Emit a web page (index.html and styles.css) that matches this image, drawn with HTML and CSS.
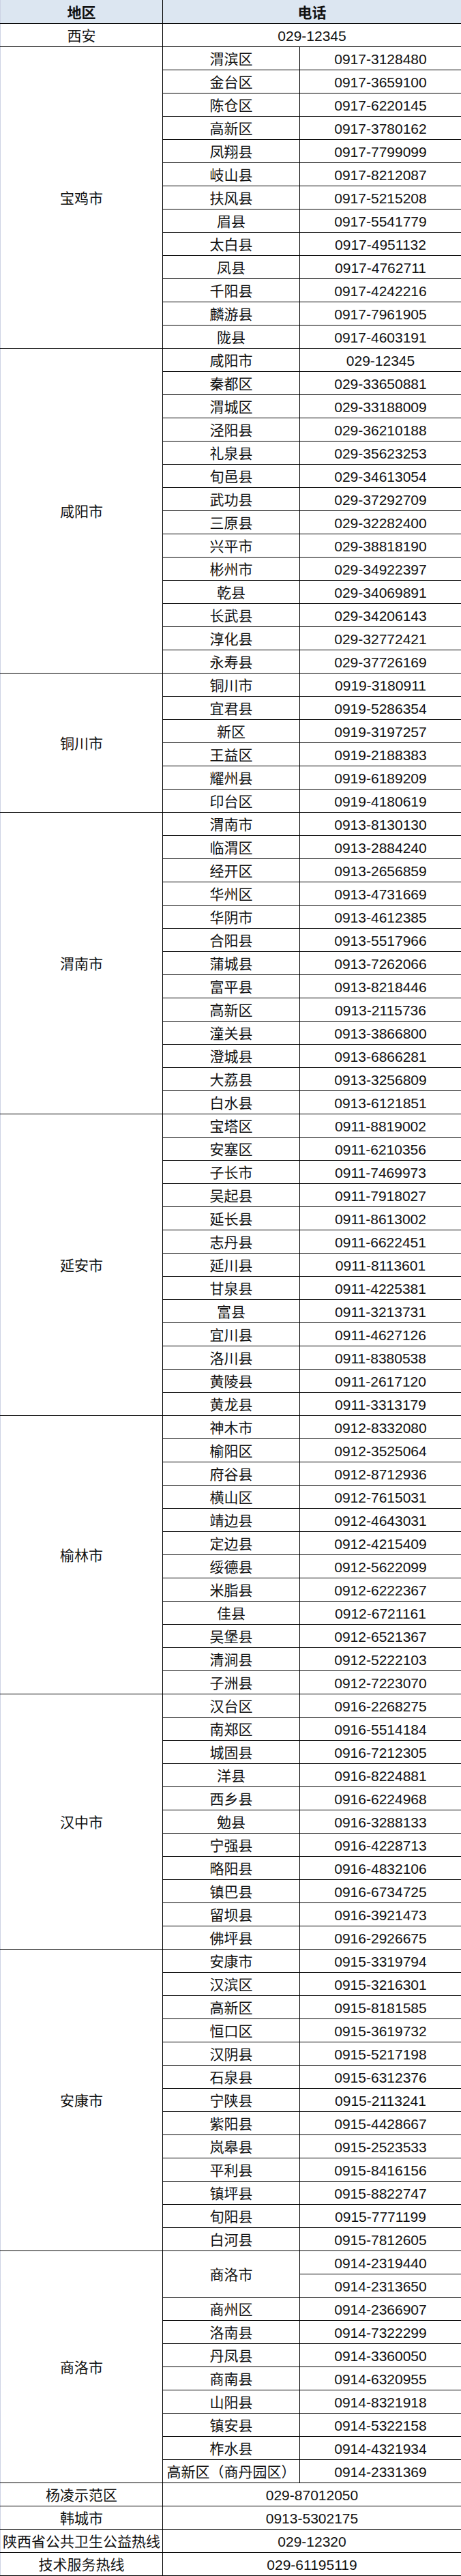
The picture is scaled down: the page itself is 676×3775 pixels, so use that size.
FILE: index.html
```html
<!DOCTYPE html>
<html lang="zh-CN">
<head>
<meta charset="utf-8">
<title>陕西各地区电话</title>
<link rel="stylesheet" href="styles.css">
</head>
<body>
<table class="tbl">
<colgroup><col class="c1"><col class="c2"><col class="c3"></colgroup>
<thead>
<tr><th class="area">地区</th><th colspan="2">电话</th></tr>
</thead>
<tbody>
<tr><td class="area">西安</td><td colspan="2">029-12345</td></tr>

<tr><td class="area" rowspan="13">宝鸡市</td><td>渭滨区</td><td>0917-3128480</td></tr>
<tr><td>金台区</td><td>0917-3659100</td></tr>
<tr><td>陈仓区</td><td>0917-6220145</td></tr>
<tr><td>高新区</td><td>0917-3780162</td></tr>
<tr><td>凤翔县</td><td>0917-7799099</td></tr>
<tr><td>岐山县</td><td>0917-8212087</td></tr>
<tr><td>扶风县</td><td>0917-5215208</td></tr>
<tr><td>眉县</td><td>0917-5541779</td></tr>
<tr><td>太白县</td><td>0917-4951132</td></tr>
<tr><td>凤县</td><td>0917-4762711</td></tr>
<tr><td>千阳县</td><td>0917-4242216</td></tr>
<tr><td>麟游县</td><td>0917-7961905</td></tr>
<tr><td>陇县</td><td>0917-4603191</td></tr>

<tr><td class="area" rowspan="14">咸阳市</td><td>咸阳市</td><td>029-12345</td></tr>
<tr><td>秦都区</td><td>029-33650881</td></tr>
<tr><td>渭城区</td><td>029-33188009</td></tr>
<tr><td>泾阳县</td><td>029-36210188</td></tr>
<tr><td>礼泉县</td><td>029-35623253</td></tr>
<tr><td>旬邑县</td><td>029-34613054</td></tr>
<tr><td>武功县</td><td>029-37292709</td></tr>
<tr><td>三原县</td><td>029-32282400</td></tr>
<tr><td>兴平市</td><td>029-38818190</td></tr>
<tr><td>彬州市</td><td>029-34922397</td></tr>
<tr><td>乾县</td><td>029-34069891</td></tr>
<tr><td>长武县</td><td>029-34206143</td></tr>
<tr><td>淳化县</td><td>029-32772421</td></tr>
<tr><td>永寿县</td><td>029-37726169</td></tr>

<tr><td class="area" rowspan="6">铜川市</td><td>铜川市</td><td>0919-3180911</td></tr>
<tr><td>宜君县</td><td>0919-5286354</td></tr>
<tr><td>新区</td><td>0919-3197257</td></tr>
<tr><td>王益区</td><td>0919-2188383</td></tr>
<tr><td>耀州县</td><td>0919-6189209</td></tr>
<tr><td>印台区</td><td>0919-4180619</td></tr>

<tr><td class="area" rowspan="13">渭南市</td><td>渭南市</td><td>0913-8130130</td></tr>
<tr><td>临渭区</td><td>0913-2884240</td></tr>
<tr><td>经开区</td><td>0913-2656859</td></tr>
<tr><td>华州区</td><td>0913-4731669</td></tr>
<tr><td>华阴市</td><td>0913-4612385</td></tr>
<tr><td>合阳县</td><td>0913-5517966</td></tr>
<tr><td>蒲城县</td><td>0913-7262066</td></tr>
<tr><td>富平县</td><td>0913-8218446</td></tr>
<tr><td>高新区</td><td>0913-2115736</td></tr>
<tr><td>潼关县</td><td>0913-3866800</td></tr>
<tr><td>澄城县</td><td>0913-6866281</td></tr>
<tr><td>大荔县</td><td>0913-3256809</td></tr>
<tr><td>白水县</td><td>0913-6121851</td></tr>

<tr><td class="area" rowspan="13">延安市</td><td>宝塔区</td><td>0911-8819002</td></tr>
<tr><td>安塞区</td><td>0911-6210356</td></tr>
<tr><td>子长市</td><td>0911-7469973</td></tr>
<tr><td>吴起县</td><td>0911-7918027</td></tr>
<tr><td>延长县</td><td>0911-8613002</td></tr>
<tr><td>志丹县</td><td>0911-6622451</td></tr>
<tr><td>延川县</td><td>0911-8113601</td></tr>
<tr><td>甘泉县</td><td>0911-4225381</td></tr>
<tr><td>富县</td><td>0911-3213731</td></tr>
<tr><td>宜川县</td><td>0911-4627126</td></tr>
<tr><td>洛川县</td><td>0911-8380538</td></tr>
<tr><td>黄陵县</td><td>0911-2617120</td></tr>
<tr><td>黄龙县</td><td>0911-3313179</td></tr>

<tr><td class="area" rowspan="12">榆林市</td><td>神木市</td><td>0912-8332080</td></tr>
<tr><td>榆阳区</td><td>0912-3525064</td></tr>
<tr><td>府谷县</td><td>0912-8712936</td></tr>
<tr><td>横山区</td><td>0912-7615031</td></tr>
<tr><td>靖边县</td><td>0912-4643031</td></tr>
<tr><td>定边县</td><td>0912-4215409</td></tr>
<tr><td>绥德县</td><td>0912-5622099</td></tr>
<tr><td>米脂县</td><td>0912-6222367</td></tr>
<tr><td>佳县</td><td>0912-6721161</td></tr>
<tr><td>吴堡县</td><td>0912-6521367</td></tr>
<tr><td>清涧县</td><td>0912-5222103</td></tr>
<tr><td>子洲县</td><td>0912-7223070</td></tr>

<tr><td class="area" rowspan="11">汉中市</td><td>汉台区</td><td>0916-2268275</td></tr>
<tr><td>南郑区</td><td>0916-5514184</td></tr>
<tr><td>城固县</td><td>0916-7212305</td></tr>
<tr><td>洋县</td><td>0916-8224881</td></tr>
<tr><td>西乡县</td><td>0916-6224968</td></tr>
<tr><td>勉县</td><td>0916-3288133</td></tr>
<tr><td>宁强县</td><td>0916-4228713</td></tr>
<tr><td>略阳县</td><td>0916-4832106</td></tr>
<tr><td>镇巴县</td><td>0916-6734725</td></tr>
<tr><td>留坝县</td><td>0916-3921473</td></tr>
<tr><td>佛坪县</td><td>0916-2926675</td></tr>

<tr><td class="area" rowspan="13">安康市</td><td>安康市</td><td>0915-3319794</td></tr>
<tr><td>汉滨区</td><td>0915-3216301</td></tr>
<tr><td>高新区</td><td>0915-8181585</td></tr>
<tr><td>恒口区</td><td>0915-3619732</td></tr>
<tr><td>汉阴县</td><td>0915-5217198</td></tr>
<tr><td>石泉县</td><td>0915-6312376</td></tr>
<tr><td>宁陕县</td><td>0915-2113241</td></tr>
<tr><td>紫阳县</td><td>0915-4428667</td></tr>
<tr><td>岚皋县</td><td>0915-2523533</td></tr>
<tr><td>平利县</td><td>0915-8416156</td></tr>
<tr><td>镇坪县</td><td>0915-8822747</td></tr>
<tr><td>旬阳县</td><td>0915-7771199</td></tr>
<tr><td>白河县</td><td>0915-7812605</td></tr>

<tr><td class="area" rowspan="10">商洛市</td><td rowspan="2">商洛市</td><td>0914-2319440</td></tr>
<tr><td>0914-2313650</td></tr>
<tr><td>商州区</td><td>0914-2366907</td></tr>
<tr><td>洛南县</td><td>0914-7322299</td></tr>
<tr><td>丹凤县</td><td>0914-3360050</td></tr>
<tr><td>商南县</td><td>0914-6320955</td></tr>
<tr><td>山阳县</td><td>0914-8321918</td></tr>
<tr><td>镇安县</td><td>0914-5322158</td></tr>
<tr><td>柞水县</td><td>0914-4321934</td></tr>
<tr><td>高新区（商丹园区）</td><td>0914-2331369</td></tr>

<tr><td class="area">杨凌示范区</td><td colspan="2">029-87012050</td></tr>
<tr><td class="area">韩城市</td><td colspan="2">0913-5302175</td></tr>
<tr><td class="area">陕西省公共卫生公益热线</td><td colspan="2">029-12320</td></tr>
<tr><td class="area">技术服务热线</td><td colspan="2">029-61195119</td></tr>
</tbody>
</table>
</body>
</html>
```

FILE: styles.css
```css
html, body {
  margin: 0;
  padding: 0;
  background: #ffffff;
}

.tbl {
  border-collapse: collapse;
  table-layout: fixed;
  width: 676px;
  font-family: "Liberation Sans", "Noto Sans CJK SC", sans-serif;
  font-size: 21px;
  color: #111111;
}

.c1 { width: 238px; }
.c2 { width: 201px; }
.c3 { width: 237px; }

.tbl tr {
  height: 34px;
}

.tbl th,
.tbl td {
  border: 1px solid #000000;
  padding: 4px 0 0 0;
  line-height: 24px;
  text-align: center;
  vertical-align: middle;
  white-space: nowrap;
  overflow: hidden;
}

.tbl th {
  background: #dce6f1;
  font-weight: bold;
  border-top: none;
}

.tbl .area {
  border-left: 1px solid #cdd3e4;
}
```
